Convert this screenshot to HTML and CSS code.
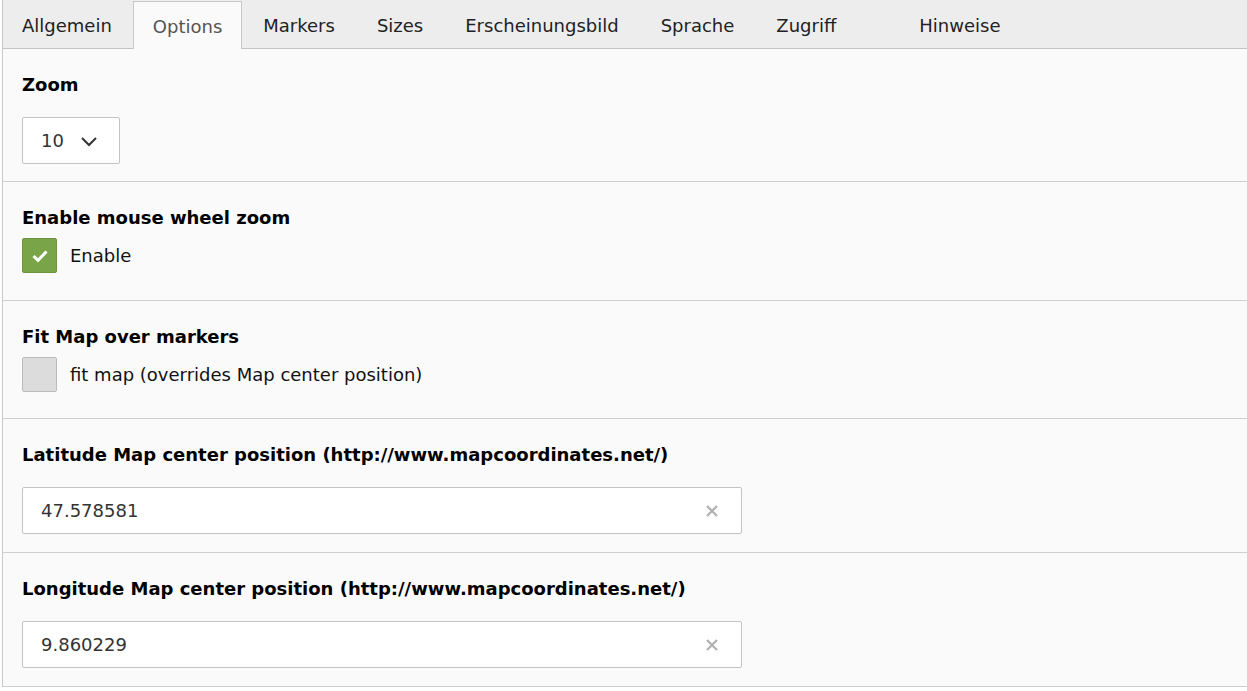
FILE: index.html
```html
<!DOCTYPE html>
<html lang="de">
<head>
<meta charset="utf-8">
<title>Options</title>
<link rel="stylesheet" href="styles.css">
</head>
<body>
<div class="panel">
  <ul class="tabs">
    <li class="tab">Allgemein</li>
    <li class="tab active">Options</li>
    <li class="tab">Markers</li>
    <li class="tab">Sizes</li>
    <li class="tab">Erscheinungsbild</li>
    <li class="tab">Sprache</li>
    <li class="tab">Zugriff</li>
    <li class="tab empty"></li>
    <li class="tab">Hinweise</li>
  </ul>
  <div class="content">
    <section class="field field-input">
      <div class="label">Zoom</div>
      <div class="select">
        <span>10</span>
        <svg class="chev" width="18" height="11" viewBox="0 0 18 11"><path d="M2 2 L9 9 L16 2" fill="none" stroke="#333" stroke-width="2"/></svg>
      </div>
    </section>
    <section class="field field-check field-first-check">
      <div class="label">Enable mouse wheel zoom</div>
      <div class="check-row">
        <span class="checkbox checked">
          <svg width="18" height="16" viewBox="0 0 18 16"><path d="M2.5 8 L7 12.3 L15.5 3.5" fill="none" stroke="#fff" stroke-width="3"/></svg>
        </span>
        <span class="check-label">Enable</span>
      </div>
    </section>
    <section class="field field-check">
      <div class="label">Fit Map over markers</div>
      <div class="check-row">
        <span class="checkbox"></span>
        <span class="check-label">fit map (overrides Map center position)</span>
      </div>
    </section>
    <section class="field field-input">
      <div class="label">Latitude Map center position (http://www.mapcoordinates.net/)</div>
      <div class="input">
        <span>47.578581</span>
        <svg class="clear" width="12" height="12" viewBox="0 0 12 12"><path d="M1 1 L11 11 M11 1 L1 11" stroke="#b0b0b0" stroke-width="2.2"/></svg>
      </div>
    </section>
    <section class="field field-input">
      <div class="label">Longitude Map center position (http://www.mapcoordinates.net/)</div>
      <div class="input">
        <span>9.860229</span>
        <svg class="clear" width="12" height="12" viewBox="0 0 12 12"><path d="M1 1 L11 11 M11 1 L1 11" stroke="#b0b0b0" stroke-width="2.2"/></svg>
      </div>
    </section>
  </div>
</div>
</body>
</html>
```

FILE: styles.css
```css
html, body {
  margin: 0;
  padding: 0;
  background: #ffffff;
}
body {
  font-family: "DejaVu Sans", Verdana, sans-serif;
  font-size: 18px;
  color: #333;
}
.panel {
  margin-left: 2px;
  border-left: 1px solid #c8c8c8;
  background: #fafafa;
}
.tabs {
  list-style: none;
  margin: 0;
  padding: 0;
  display: flex;
  background: #ededed;
  border-bottom: 1px solid #c3c3c3;
  height: 48px;
}
.tab {
  padding: 0 23px 0 19px;
  line-height: 52px;
  height: 48px;
  box-sizing: border-box;
  color: #222;
  white-space: nowrap;
  font-size: 18px;
}
.tab:first-child {
  padding-right: 21px;
}
.tab.active {
  background: #fafafa;
  border: 1px solid #c8c8c8;
  border-bottom: none;
  margin-top: 1px;
  margin-bottom: -1px;
  line-height: 50px;
  color: #555;
  padding: 0 19px 0 19px;
}
.tab.active + .tab {
  padding-left: 21px;
}
.tab.empty {
  width: 41px;
  padding: 0;
}
.content {
  background: #fafafa;
}
.field {
  padding: 26px 0 0 19px;
  border-bottom: 1px solid #cfcfcf;
}
.field-input {
  padding-bottom: 17px;
}
.field-check + .field-input,
.field-input + .field-input {
  padding-bottom: 18px;
}
.field-check {
  padding-bottom: 26px;
}
.field-first-check {
  padding-bottom: 27px;
}
.label {
  font-weight: bold;
  color: #000;
  line-height: 20px;
  white-space: nowrap;
}
.field-input .label {
  margin-bottom: 22px;
}
.field-check .label {
  margin-bottom: 10px;
}
.select {
  width: 98px;
  height: 47px;
  box-sizing: border-box;
  border: 1px solid #c3c3c3;
  border-radius: 2px;
  background: #fff;
  display: flex;
  align-items: center;
  padding-left: 18px;
  gap: 16px;
  color: #333;
}
.chev {
  margin-top: 1px;
}
.check-row {
  display: flex;
  align-items: center;
  gap: 13px;
  height: 35px;
}
.checkbox {
  width: 35px;
  height: 35px;
  box-sizing: border-box;
  border: 1px solid #bbb;
  border-radius: 2px;
  background: #dcdcdc;
  display: flex;
  align-items: center;
  justify-content: center;
}
.checkbox.checked {
  background: #79a548;
  border-color: #6b9340;
}
.check-label {
  color: #111;
}
.input {
  width: 720px;
  height: 47px;
  box-sizing: border-box;
  border: 1px solid #c3c3c3;
  border-radius: 2px;
  background: #fff;
  display: flex;
  align-items: center;
  justify-content: space-between;
  padding: 0 23px 0 18px;
  color: #333;
}
```
